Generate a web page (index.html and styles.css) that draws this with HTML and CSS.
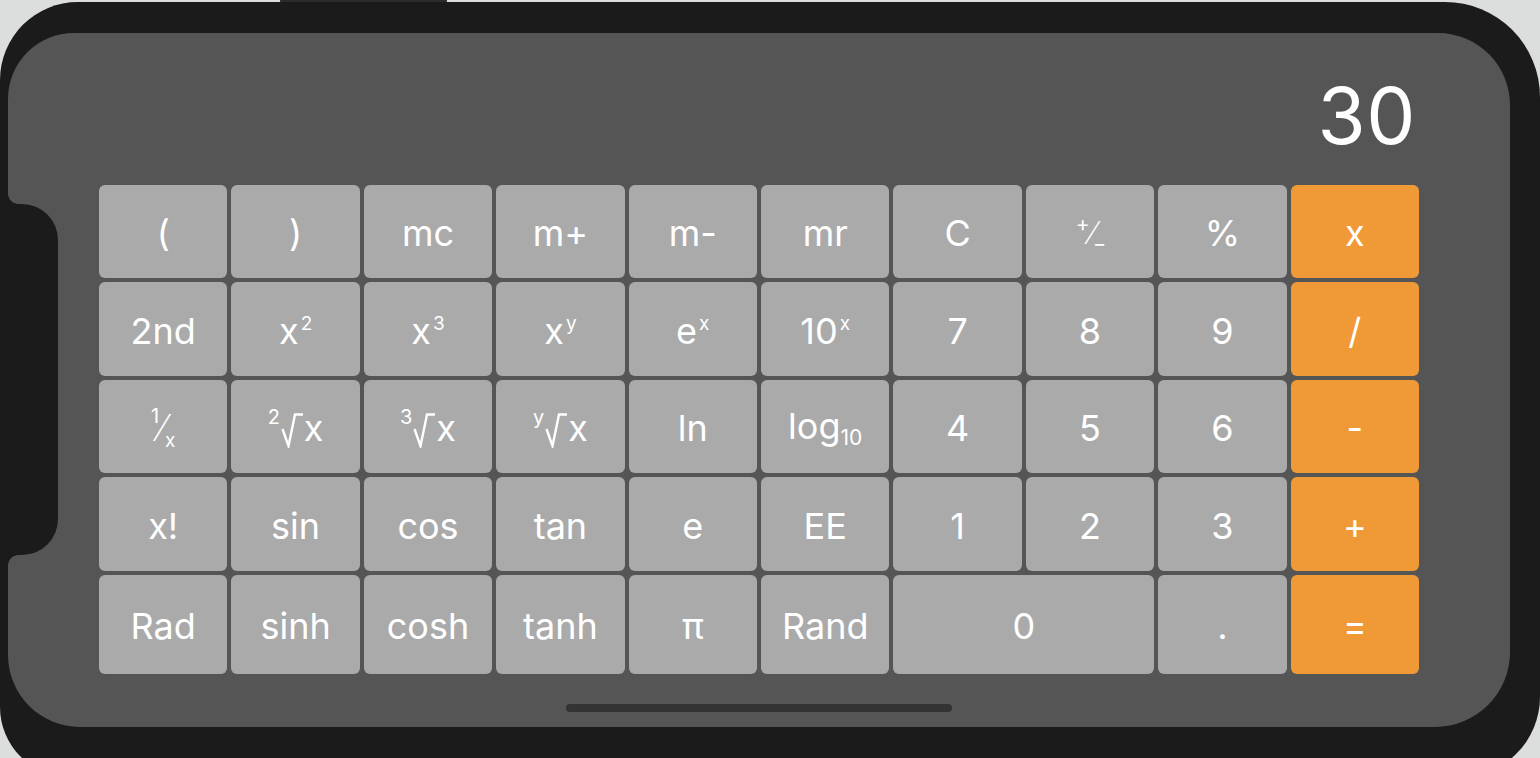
FILE: index.html
```html
<!DOCTYPE html>
<html>
<head>
<meta charset="utf-8">
<link rel="stylesheet" href="styles.css">
</head>
<body>
<div class="sensor"></div>
<div class="device">
  <div class="notch"></div>
  <div class="screen">
    <div class="display">30</div>
    <div class="keypad">
      <div class="key">(</div>
      <div class="key">)</div>
      <div class="key">mc</div>
      <div class="key">m+</div>
      <div class="key">m-</div>
      <div class="key">mr</div>
      <div class="key">C</div>
      <div class="key"><span class="frac pm"><span class="num">+</span><span class="sl">⁄</span><span class="den">_</span></span></div>
      <div class="key">%</div>
      <div class="key op">x</div>

      <div class="key">2nd</div>
      <div class="key"><span class="lbl">x<span class="sup">2</span></span></div>
      <div class="key"><span class="lbl">x<span class="sup">3</span></span></div>
      <div class="key"><span class="lbl">x<span class="sup">y</span></span></div>
      <div class="key"><span class="lbl">e<span class="sup">x</span></span></div>
      <div class="key"><span class="lbl">10<span class="sup">x</span></span></div>
      <div class="key">7</div>
      <div class="key">8</div>
      <div class="key">9</div>
      <div class="key op">/</div>

      <div class="key"><span class="frac"><span class="num">1</span><span class="sl">⁄</span><span class="den">x</span></span></div>
      <div class="key"><span class="rootidx">2</span><svg class="root" viewBox="0 0 22 36" width="22" height="36"><path d="M1.5 17 L7.5 34 L14 2.5 L22 2.5" fill="none" stroke="#fff" stroke-width="2.4" stroke-linejoin="miter"/></svg><span class="radx">x</span></div>
      <div class="key"><span class="rootidx">3</span><svg class="root" viewBox="0 0 22 36" width="22" height="36"><path d="M1.5 17 L7.5 34 L14 2.5 L22 2.5" fill="none" stroke="#fff" stroke-width="2.4" stroke-linejoin="miter"/></svg><span class="radx">x</span></div>
      <div class="key"><span class="rootidx">y</span><svg class="root" viewBox="0 0 22 36" width="22" height="36"><path d="M1.5 17 L7.5 34 L14 2.5 L22 2.5" fill="none" stroke="#fff" stroke-width="2.4" stroke-linejoin="miter"/></svg><span class="radx">x</span></div>
      <div class="key">ln</div>
      <div class="key"><span class="lbl">log<span class="sub">10</span></span></div>
      <div class="key">4</div>
      <div class="key">5</div>
      <div class="key">6</div>
      <div class="key op">-</div>

      <div class="key">x!</div>
      <div class="key">sin</div>
      <div class="key">cos</div>
      <div class="key">tan</div>
      <div class="key">e</div>
      <div class="key">EE</div>
      <div class="key">1</div>
      <div class="key">2</div>
      <div class="key">3</div>
      <div class="key op">+</div>

      <div class="key">Rad</div>
      <div class="key">sinh</div>
      <div class="key">cosh</div>
      <div class="key">tanh</div>
      <div class="key">π</div>
      <div class="key">Rand</div>
      <div class="key wide">0</div>
      <div class="key">.</div>
      <div class="key op">=</div>
    </div>
    <div class="home"></div>
  </div>
</div>
</body>
</html>
```

FILE: styles.css
```css
html, body {
  margin: 0;
  padding: 0;
}
body {
  width: 1540px;
  height: 758px;
  overflow: hidden;
  background: #dcdddd;
  font-family: "Inter", "Liberation Sans", "DejaVu Sans", sans-serif;
  position: relative;
}
.sensor {
  position: absolute;
  left: 280px;
  top: 0;
  width: 167px;
  height: 3px;
  background: #2b2b2b;
  border-radius: 0 0 2px 2px;
}
.device {
  margin-top: 2px;
  width: 1540px;
  height: 775px;
  box-sizing: border-box;
  padding: 31px 30px 0 8px;
  background: #1b1b1b;
  border-radius: 78px 95px 80px 70px;
  position: relative;
}
.notch {
  position: absolute;
  left: 0;
  top: 202px;
  width: 58px;
  height: 351px;
  background: #1b1b1b;
  border-radius: 0 36px 36px 0;
  z-index: 2;
}
.notch::before,
.notch::after {
  content: "";
  position: absolute;
  left: 8px;
  width: 10px;
  height: 10px;
}
.notch::before {
  top: -10px;
  background: radial-gradient(circle at 100% 0, transparent 9.5px, #1b1b1b 10px);
}
.notch::after {
  bottom: -10px;
  background: radial-gradient(circle at 100% 100%, transparent 9.5px, #1b1b1b 10px);
}
.screen {
  position: relative;
  width: 1502px;
  height: 694px;
  box-sizing: border-box;
  padding: 0 91px;
  background: #555555;
  border-radius: 66px 72px 75px 72px;
}
.display {
  height: 152px;
  box-sizing: border-box;
  padding: 43px 3px 0 0;
  text-align: right;
  color: #fff;
  font-size: 78px;
  line-height: 80px;
  font-weight: 400;
  letter-spacing: 0.5px;
}
.keypad {
  display: grid;
  grid-template-columns: repeat(10, 1fr);
  grid-template-rows: 93px 94px 93px 94px 99px;
  column-gap: 4px;
  row-gap: 4px;
}
.key {
  background: #aaaaaa;
  border-radius: 6px;
  color: #fff;
  display: flex;
  align-items: center;
  justify-content: center;
  font-size: 36px;
  line-height: 1;
  font-weight: 400;
  padding-top: 3px;
  box-sizing: border-box;
}
.key.op {
  background: #f09a37;
}
.key.wide {
  grid-column: span 2;
}
.lbl {
  display: inline-block;
}
.sup {
  font-size: 19px;
  vertical-align: 14px;
  margin-left: 2px;
}
.sub {
  font-size: 21px;
  vertical-align: -6px;
}
.frac {
  display: inline-flex;
  height: 44px;
  align-items: center;
}
.frac .num {
  align-self: flex-start;
  font-size: 20px;
}
.frac .sl {
  font-size: 36px;
  font-family: "DejaVu Sans", sans-serif;
  font-weight: 300;
}
.frac .den {
  align-self: flex-end;
  font-size: 19px;
}
.frac.pm .num {
  font-size: 21px;
  margin-top: 2px;
}
.frac.pm .sl {
  font-size: 32px;
}
.frac.pm .den {
  font-size: 20px;
  margin-bottom: 8px;
}
.rootidx {
  font-size: 20px;
  align-self: center;
  margin-top: -22px;
  margin-right: 1px;
}
.root {
  display: block;
  margin-top: 4px;
}
.radx {
  font-size: 36px;
  margin-left: 1px;
}
.home {
  position: absolute;
  left: 50%;
  bottom: 15px;
  width: 386px;
  height: 8px;
  margin-left: -193px;
  background: #333333;
  border-radius: 4px;
}
```
